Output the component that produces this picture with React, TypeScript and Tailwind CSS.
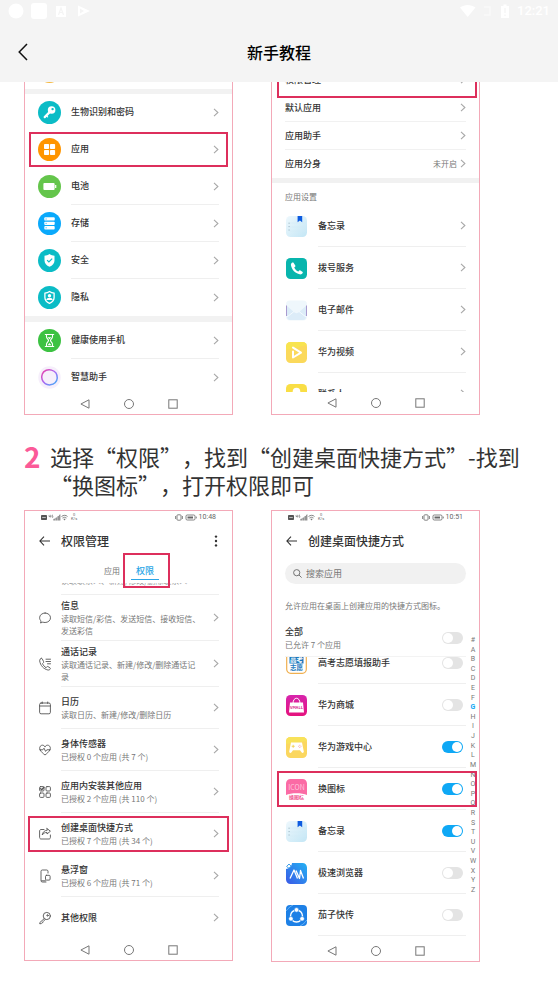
import React, { useState } from 'react';

interface SettingItem {
  title: string;
  icon: React.ReactNode;
  divider?: boolean;
  highlighted?: boolean;
}

interface PermissionItem {
  title: string;
  lines: string[];
  icon: React.ReactNode;
  highlighted?: boolean;
}

interface AppItem {
  title: string;
  icon: React.ReactNode;
  allowed?: boolean;
  highlighted?: boolean;
}

const Chevron: React.FC = () => (
  <svg className="w-[6px] h-[9px] shrink-0" viewBox="0 0 6 9" fill="none" stroke="#a8a8a8" strokeWidth="1.1">
    <path d="M1 .8 4.9 4.5 1 8.2" />
  </svg>
);

const Circle: React.FC<{ color: string; children: React.ReactNode }> = ({ color, children }) => (
  <svg className="w-[23px] h-[23px] shrink-0" viewBox="0 0 23 23" fill="none">
    <circle cx="11.5" cy="11.5" r="11.5" fill={color} />
    {children}
  </svg>
);

const AppIcon: React.FC<{ children: React.ReactNode }> = ({ children }) => (
  <svg className="w-[21px] h-[21px] shrink-0" viewBox="0 0 21 21" fill="none">
    {children}
  </svg>
);

const LineIcon: React.FC<{ children: React.ReactNode }> = ({ children }) => (
  <svg
    className="w-3 h-[14px] shrink-0"
    viewBox="0 0 12 14"
    fill="none"
    stroke="#555"
    strokeWidth="0.9"
    strokeLinecap="round"
    strokeLinejoin="round"
  >
    {children}
  </svg>
);

const NotesIcon: React.FC = () => (
  <AppIcon>
    <defs>
      <linearGradient id="notes" x1="0" y1="0" x2="1" y2="1">
        <stop offset="0" stopColor="#eef8fd" />
        <stop offset="1" stopColor="#c3e6f5" />
      </linearGradient>
    </defs>
    <rect width="21" height="21" rx="4.5" fill="url(#notes)" />
    <path d="M4 7h16M4 11h16M4 15h16" stroke="#d3ebf6" strokeWidth=".5" />
    <path d="M2.5 7.2h1.2M2.5 10.6h1.2M2.5 14h1.2" stroke="#8fa9b8" strokeWidth=".8" />
    <path d="M11.6 0h4.6v6.2l-2.3-1.8-2.3 1.8z" fill="#0d5be0" />
  </AppIcon>
);

const settings: SettingItem[] = [
  {
    title: '生物识别和密码',
    icon: (
      <Circle color="#0bbcc6">
        <circle cx="13.6" cy="9" r="3.8" fill="#fff" />
        <circle cx="14.6" cy="8.1" r="1.2" fill="#0bbcc6" />
        <path d="M11.4 11.4 6.7 16.1" stroke="#fff" strokeWidth="2.2" strokeLinecap="round" />
        <path d="m8.4 14.6 1.2 1.2" stroke="#fff" strokeWidth="1.2" strokeLinecap="round" />
      </Circle>
    )
  },
  {
    title: '应用',
    highlighted: true,
    icon: (
      <Circle color="#ff9500">
        <rect x="6" y="6" width="5.1" height="5.1" rx=".8" fill="#fff" />
        <rect x="12" y="6" width="5.1" height="5.1" rx=".8" fill="#fff" />
        <rect x="6" y="12" width="5.1" height="5.1" rx=".8" fill="#fff" />
        <rect x="12" y="12" width="5.1" height="5.1" rx=".8" fill="#fff" />
      </Circle>
    )
  },
  {
    title: '电池',
    divider: true,
    icon: (
      <Circle color="#64c54b">
        <rect x="5.4" y="8" width="11.2" height="7" rx="1" fill="#fff" />
        <path d="M17.7 10v3" stroke="#fff" strokeWidth="1.2" />
      </Circle>
    )
  },
  {
    title: '存储',
    divider: true,
    icon: (
      <Circle color="#0aa9fb">
        <rect x="6.3" y="5.3" width="10.4" height="3.3" rx=".9" fill="#fff" />
        <rect x="6.3" y="9.7" width="10.4" height="3.3" rx=".9" fill="#fff" />
        <rect x="6.3" y="14.1" width="10.4" height="3.3" rx=".9" fill="#fff" />
        <path d="M7.6 7h1M7.6 11.4h1M7.6 15.8h1" stroke="#0aa9fb" strokeWidth=".9" />
      </Circle>
    )
  },
  {
    title: '安全',
    divider: true,
    icon: (
      <Circle color="#0bbcc6">
        <path d="M11.5 5c1.6 1.1 3.2 1.6 5 1.8v4.7c0 3-2 5.1-5 6.3-3-1.2-5-3.3-5-6.3V6.8c1.8-.2 3.4-.7 5-1.8z" fill="#fff" />
        <path d="m9.1 11.2 1.8 1.8 3.3-3.3" stroke="#0bbcc6" strokeWidth="1.2" />
      </Circle>
    )
  },
  {
    title: '隐私',
    icon: (
      <Circle color="#0bbcc6">
        <path
          d="M11.5 5.5c1.6 1.1 3 1.5 4.6 1.7v4.3c0 2.8-1.8 4.6-4.6 5.8-2.8-1.2-4.6-3-4.6-5.8V7.2c1.6-.2 3-.6 4.6-1.7z"
          stroke="#fff"
          strokeWidth="1.3"
        />
        <circle cx="11.5" cy="9.8" r="1.7" fill="#fff" />
        <path d="M8.3 14c.2-1.6 1.4-2.3 3.2-2.3s3 .7 3.2 2.3z" fill="#fff" />
      </Circle>
    )
  }
];

const wellbeing: SettingItem[] = [
  {
    title: '健康使用手机',
    divider: true,
    icon: (
      <Circle color="#3cc242">
        <path
          d="M7.3 5.5h8.4M7.3 17.5h8.4M8.5 5.5v2.3c0 1.6 2 2.4 2 3.7s-2 2.1-2 3.7v2.3M14.5 5.5v2.3c0 1.6-2 2.4-2 3.7s2 2.1 2 3.7v2.3"
          stroke="#fff"
          strokeWidth="1.1"
          strokeLinecap="round"
        />
        <path d="M9.6 8.3h3.8l-1.9 2zM9.6 16.2l1.9-2.2 1.9 2.2z" fill="#fff" />
      </Circle>
    )
  },
  {
    title: '智慧助手',
    icon: (
      <svg className="w-[23px] h-[23px] shrink-0" viewBox="0 0 23 23" fill="none">
        <defs>
          <linearGradient id="assistant" x1="0" y1="0" x2="1" y2="1">
            <stop offset="0" stopColor="#f03fa5" />
            <stop offset=".5" stopColor="#a568f5" />
            <stop offset="1" stopColor="#38b6f7" />
          </linearGradient>
        </defs>
        <circle cx="11.5" cy="11.5" r="11.2" fill="#f6effb" />
        <path
          d="M8.2 4.3c3.3-1.1 7.7-.2 9.7 2.6 2 3 1.9 7.3-.8 9.9-2.5 2.4-7 2.8-9.9.8-3-2-4.2-6-3-9.3.6-1.9 2.1-3.3 4-4z"
          stroke="url(#assistant)"
          strokeWidth="1.5"
        />
      </svg>
    )
  }
];

const systemApps: SettingItem[] = [
  { title: '备忘录', icon: <NotesIcon /> },
  {
    title: '拨号服务',
    icon: (
      <AppIcon>
        <rect width="21" height="21" rx="4.5" fill="#08b5ad" />
        <path
          d="M6.3 4.6c-1 .6-1.6 1.5-1.3 2.9.9 4.3 4.2 7.8 8.7 8.8 1.3.3 2.4-.2 3-1.3.3-.5.1-.9-.3-1.2l-2-1.3c-.5-.3-1-.2-1.3.2l-.7.9c-1.9-.8-3.3-2.2-4.2-4.1l.9-.8c.4-.3.5-.8.2-1.3L7.7 4.9c-.4-.5-.9-.6-1.4-.3z"
          fill="#fff"
        />
      </AppIcon>
    )
  },
  {
    title: '电子邮件',
    icon: (
      <AppIcon>
        <rect y=".5" width="21" height="20" rx="4" fill="#eff7fc" />
        <path d="m1 6 7.5 6.5c1.2 1 2.800 1 4 0L20 6v11c0 1.5-1 3-3 3H4c-2 0-3-1.5-3-3z" fill="#dcecf8" />
        <path d="m1 17 7-5.5M20 17l-7-5.5" stroke="#f5fbff" />
        <path d="M.5 5.5V16M20.5 5.5V16" stroke="#a99bd0" />
      </AppIcon>
    )
  },
  {
    title: '华为视频',
    icon: (
      <AppIcon>
        <rect width="21" height="21" rx="4.5" fill="#fbd95b" />
        <path d="M0 8 21 3V4.5C21 2 19 0 16.5 0h-12C2 0 0 2 0 4.5z" fill="#f8e44f" />
        <path d="M7 9.5v6L15 10.7 7 5.6" stroke="#fff" strokeWidth="2" strokeLinejoin="round" strokeLinecap="round" />
      </AppIcon>
    )
  },
  {
    title: '联系人',
    icon: (
      <AppIcon>
        <rect width="21" height="21" rx="4.5" fill="#f9de45" />
        <circle cx="10.5" cy="7.5" r="3.8" fill="#fff" />
        <path d="M3 18c0-4 3-6 7.5-6s7.5 2 7.5 6z" fill="#fff" />
      </AppIcon>
    )
  }
];

const permissions: PermissionItem[] = [
  {
    title: '信息',
    lines: ['读取短信/彩信、发送短信、接收短信、', '发送彩信'],
    icon: (
      <LineIcon>
        <path d="M6.1 2C9 2 11.5 4 11.5 6.8s-2.5 4.7-5.4 4.7c-.8 0-1.6-.1-2.3-.4L1.5 12l.6-2C1.2 9.2.6 8.1.6 6.8.6 4 3.2 2 6.1 2z" />
      </LineIcon>
    )
  },
  {
    title: '通话记录',
    lines: ['读取通话记录、新建/修改/删除通话记', '录'],
    icon: (
      <LineIcon>
        <path d="M2 1.5c-.8.5-1.5 1.4-1.3 2.5.7 4.5 3.8 8 8.2 9 1 .2 2-.3 2.4-1.1.2-.5 0-.9-.4-1.2L8.9 9.6c-.4-.2-.8-.1-1.1.2l-.7.9C5.4 9.7 4.2 8.3 3.5 6.6l.9-.8c.3-.3.4-.7.2-1.1L3.3 1.9c-.3-.5-.8-.7-1.3-.4zM7 2.2h4.5M7 4.5h4.5M8.5 6.8h3" />
      </LineIcon>
    )
  },
  {
    title: '日历',
    lines: ['读取日历、新建/修改/删除日历'],
    icon: (
      <LineIcon>
        <rect x=".6" y="2" width="10.8" height="10.8" rx="1.5" />
        <path d="M.6 5h10.8M3.3 1v1.5M8.7 1v1.5" />
      </LineIcon>
    )
  },
  {
    title: '身体传感器',
    lines: ['已授权 0 个应用 (共 7 个)'],
    icon: (
      <LineIcon>
        <path d="M6 3.6C5 2.2 3.6 1.9 2.4 2.4.6 3.2.2 5.3 1.2 7 2.2 8.9 4.2 10.7 6 12c1.8-1.3 3.8-3.1 4.8-5 1-1.7.6-3.8-1.2-4.6-1.2-.5-2.6-.2-3.6 1.2z" />
        <path d="M.8 6.8h3l1.2-1.6 1.6 3.2 1.2-1.6h3.4" />
      </LineIcon>
    )
  },
  {
    title: '应用内安装其他应用',
    lines: ['已授权 2 个应用 (共 110 个)'],
    icon: (
      <LineIcon>
        <rect x=".6" y="1.6" width="4.4" height="4.4" rx="1" />
        <rect x="7" y="1.6" width="4.4" height="4.4" rx="1" />
        <rect x=".6" y="8" width="4.4" height="4.4" rx="1" />
        <rect x="7" y="8" width="4.4" height="4.4" rx="1" />
        <path d="m1.5 3.6 1.2 1.2 2.3-2.6" strokeWidth="1.3" />
      </LineIcon>
    )
  },
  {
    title: '创建桌面快捷方式',
    lines: ['已授权 7 个应用 (共 34 个)'],
    highlighted: true,
    icon: (
      <LineIcon>
        <path d="M5 2.5H2C1.2 2.5.6 3.1.6 4v6.5c0 .9.6 1.5 1.4 1.5h8c.8 0 1.4-.6 1.4-1.5V8" />
        <path d="m8 1.5 3.4 2.7L8 7V5.4c-2 0-3.7.9-4.8 2.6C3.5 5.5 5.2 3.5 8 3.2z" />
      </LineIcon>
    )
  },
  {
    title: '悬浮窗',
    lines: ['已授权 6 个应用 (共 71 个)'],
    icon: (
      <LineIcon>
        <path d="M9 4V2.3C9 1.5 8.5 1 7.7 1H3.3C2.5 1 2 1.5 2 2.3v9.4c0 .8.5 1.3 1.3 1.3H7M2.5 11.8h4" />
        <rect x="6.5" y="6.3" width="4.6" height="4.8" rx="1" />
      </LineIcon>
    )
  },
  {
    title: '其他权限',
    lines: [],
    icon: (
      <LineIcon>
        <circle cx="7.8" cy="5" r="3.6" />
        <circle cx="8.5" cy="4.4" r=".7" />
        <path d="M5.2 7.6.7 11.7v1h1.5l.7-.9.9-.2.3-1 2-2" />
      </LineIcon>
    )
  }
];

const shortcutApps: AppItem[] = [
  {
    title: '高考志愿填报助手',
    icon: (
      <AppIcon>
        <rect x=".7" y=".7" width="19.6" height="19.6" rx="4" fill="#fff" stroke="#f0b050" strokeWidth="1.2" />
        <rect x="3.5" y="2" width="14" height="8.5" fill="#1c78bd" />
        <text x="10.5" y="9" fontSize="6.5" fontWeight="700" fill="#fff" textAnchor="middle">高考</text>
        <text x="10.5" y="17.2" fontSize="6.5" fontWeight="700" fill="#1c78bd" textAnchor="middle">志愿</text>
      </AppIcon>
    )
  },
  {
    title: '华为商城',
    icon: (
      <AppIcon>
        <defs>
          <linearGradient id="mall" x1="0" y1="0" x2="0" y2="1">
            <stop offset="0" stopColor="#d725ad" />
            <stop offset="1" stopColor="#e5127d" />
          </linearGradient>
        </defs>
        <rect width="21" height="21" rx="4.5" fill="url(#mall)" />
        <path d="M4 7.5h13L18 17.5H3z" fill="#fff" />
        <path d="M7 8.5c0-7 7-7 7 0" stroke="#fff" />
        <text x="10.5" y="13.5" fontSize="4" fontWeight="700" fill="#d81b8c" textAnchor="middle">VMALL</text>
      </AppIcon>
    )
  },
  {
    title: '华为游戏中心',
    allowed: true,
    icon: (
      <AppIcon>
        <rect width="21" height="21" rx="4.5" fill="#fbd75f" />
        <path d="M0 7 21 4C21 2 19 0 16.5 0h-12C2 0 0 2 0 4.5z" fill="#f8e25a" />
        <path d="M5 5.5h11l1.8 9c.1 1.5-1.5 1.9-2.3.8l-1.5-2H7l-1.500 2c-.8 1.1-2.4.7-2.300-.8z" fill="#fff" />
        <path d="M5.700 9.300h3M7.200 7.800v3" stroke="#f2cf55" strokeWidth=".9" />
        <path d="M13.800 7.800v.9M13.800 10v.9M12.300 9.300h.8M14.600 9.300h.8" stroke="#ef8b91" strokeWidth=".8" />
      </AppIcon>
    )
  },
  {
    title: '换图标',
    allowed: true,
    highlighted: true,
    icon: (
      <AppIcon>
        <rect width="21" height="21" rx="4.5" fill="#fff" />
        <path d="M0 16V4.5C0 2 2 0 4.5 0h12C19 0 21 2 21 4.5V16c-5-2.5-16-2.5-21 0z" fill="#fb6ba5" />
        <text x="10.5" y="11" fontSize="7" fill="#ffc5dc" textAnchor="middle">ICON</text>
        <text x="10.5" y="20" fontSize="5" fontWeight="700" fill="#f0558f" textAnchor="middle">换图标</text>
      </AppIcon>
    )
  },
  { title: '备忘录', allowed: true, icon: <NotesIcon /> },
  {
    title: '极速浏览器',
    icon: (
      <AppIcon>
        <defs>
          <linearGradient id="browser" x1="0" y1="1" x2="1" y2="0">
            <stop offset="0" stopColor="#3a58e6" />
            <stop offset="1" stopColor="#24b2f3" />
          </linearGradient>
        </defs>
        <path d="M6 0h10.5C19 0 21 2 21 4.5v12c0 2.5-2 4.5-4.5 4.5h-12C2 21 0 19 0 16.5V6c2.5 0 6-3 6-6z" fill="url(#browser)" />
        <path d="M.6 3.5 3 1l2.2 2.3L3 5.3z" stroke="#3e9fe8" />
        <path d="M4 15.5 8 7l3.5 8.5M10 7.5l3.5 8 1-8 3 8" stroke="#fff" strokeWidth="1.3" strokeLinejoin="round" />
      </AppIcon>
    )
  },
  {
    title: '茄子快传',
    icon: (
      <AppIcon>
        <rect width="21" height="21" rx="4" fill="#1d80e6" />
        <path d="M0 6c2-2.5 4-4.5 7-6M21 15c-2 2.5-4 4.5-7 6" stroke="#7cc0f8" strokeWidth=".8" />
        <circle cx="10.5" cy="11" r="6" stroke="#fff" strokeWidth="1.4" />
        <circle cx="10.5" cy="4.9" r="2.3" fill="#fff" stroke="#1d80e6" strokeWidth=".6" />
        <circle cx="4.9" cy="13.8" r="2.3" fill="#fff" stroke="#1d80e6" strokeWidth=".6" />
        <circle cx="16.1" cy="13.8" r="2.3" fill="#fff" stroke="#1d80e6" strokeWidth=".6" />
      </AppIcon>
    )
  }
];

const indexLetters = '#ABCDEFGHIJKLMNOPQRSTUVWXYZ'.split('');

const Phone: React.FC<{ label: string; scrolled?: boolean; children: React.ReactNode }> = ({
  label,
  scrolled,
  children
}) => (
  <section
    aria-label={label}
    className={`relative overflow-hidden border-x border-b border-[#f3a9b8] bg-white text-[#333] ${
      scrolled ? '' : 'border-t'
    }`}
  >
    {children}
  </section>
);

const NavBar: React.FC<{ className: string }> = ({ className }) => (
  <div className={`flex items-center justify-center gap-[34px] bg-white ${className}`}>
    <button type="button" aria-label="返回">
      <svg className="w-[10px] h-[10px]" viewBox="0 0 10 10" fill="none" stroke="#777" strokeLinejoin="round">
        <path d="M9 .8v8.4L.9 5z" />
      </svg>
    </button>
    <button type="button" aria-label="主页">
      <svg className="w-[10px] h-[10px]" viewBox="0 0 10 10" fill="none" stroke="#777">
        <circle cx="5" cy="5" r="4.5" />
      </svg>
    </button>
    <button type="button" aria-label="最近任务">
      <svg className="w-[10px] h-[10px]" viewBox="0 0 10 10" fill="none" stroke="#777">
        <rect x=".8" y=".8" width="8.4" height="8.4" />
      </svg>
    </button>
  </div>
);

const PhoneStatus: React.FC<{ time: string }> = ({ time }) => (
  <div className="flex h-3 items-center justify-between pl-4 pr-4 font-[Roboto,sans-serif] text-[#666]">
    <div className="flex items-center gap-[3px]">
      <svg className="w-[27px] h-[7px]" viewBox="0 0 27 7" fill="none">
        <rect y="1" width="6" height="5" rx=".8" fill="#555" />
        <path d="M1.2 3.5h3.6" stroke="#bbb" />
        <path d="M8 1.2v1.3h1.5M9.3.8v2.7M11 1.2h1M11 1.2v2h1V2.4" stroke="#666" strokeWidth=".6" />
        <path d="M12.5 6.5V5l1.2-.5v2zM14.5 6.5V4l1.2-.8v3.3zM16.500 6.500v-4l1.200-.8v4.800zM18.300 6.500V1l1-.7v6.200z" fill="#666" />
        <path d="M20.500 2.500c2-1.600 4.500-1.600 6 0M21.500 4c1.300-1 2.700-1 4 0" stroke="#777" strokeWidth=".9" />
        <path d="m22.200 4.800 1.300 1.700 1.300-1.700z" fill="#777" />
      </svg>
      <div className="flex flex-col items-center text-[4px] leading-[4px]">
        <span>0</span>
        <span>K/s</span>
      </div>
    </div>
    <div className="flex items-center gap-[2px]">
      <svg className="w-[22px] h-[7px]" viewBox="0 0 22 7" fill="none" stroke="#666" strokeWidth=".8">
        <rect x="2" y=".8" width="4" height="5.4" rx=".8" />
        <path d="M.6 2v3M7.4 2v3" />
        <rect x="11" y="1" width="9" height="5" rx="1.2" />
        <path d="M12.5 3.5h5.500" strokeWidth="2" />
        <path d="M21.3 2.6v1.8" />
      </svg>
      <span className="text-[7px] leading-3">{time}</span>
    </div>
  </div>
);

const BackArrow: React.FC = () => (
  <button type="button" aria-label="返回">
    <svg className="w-[11px] h-[10px]" viewBox="0 0 11 10" fill="none" stroke="#333" strokeWidth="1.1">
      <path d="M5 .6.9 5 5 9.4M.9 5H11" />
    </svg>
  </button>
);

const SettingRow: React.FC<{ item: SettingItem }> = ({ item }) => (
  <a href="#" className="relative flex h-[37px] items-center gap-[10px] pl-[13px] pr-[13px]">
    {item.icon}
    <div
      className={`flex flex-1 items-center justify-between self-stretch border-b ${
        item.divider ? 'border-[#efefef]' : 'border-transparent'
      }`}
    >
      <span className="text-[9px] font-medium">{item.title}</span>
      <Chevron />
    </div>
    {item.highlighted && <span className="absolute inset-x-1 inset-y-px border-2 border-[#dd2f5c]" />}
  </a>
);

const SimpleRow: React.FC<{ title: string; value?: string; last?: boolean }> = ({ title, value, last }) => (
  <a
    href="#"
    className={`mx-[13px] flex h-7 items-center justify-between border-b ${
      last ? 'border-transparent' : 'border-[#f1f1f1]'
    }`}
  >
    <span className="text-[9px] font-medium">{title}</span>
    <span className="flex items-center gap-[3px] text-[8px] text-[#777]">
      {value}
      <Chevron />
    </span>
  </a>
);

const SettingsPhone: React.FC = () => (
  <Phone label="设置" scrolled>
    <div className="-mt-[29px] flex h-9 items-center pl-[13px]">
      <Circle color="#f5b73c">
        <circle cx="11.5" cy="11.5" r="4" fill="#fff" />
      </Circle>
    </div>
    <div className="h-[5px] bg-[#f2f2f2]" />
    {settings.map((item) => (
      <SettingRow key={item.title} item={item} />
    ))}
    <div className="h-[6px] bg-[#f2f2f2]" />
    {wellbeing.map((item) => (
      <SettingRow key={item.title} item={item} />
    ))}
    <NavBar className="h-[18px] pb-[2px]" />
  </Phone>
);

const AppsPhone: React.FC = () => (
  <Phone label="应用" scrolled>
    <div className="relative -mt-4">
      <SimpleRow title="权限管理" last />
      <span className="absolute -bottom-1 left-[5px] right-[2px] top-0 border-2 border-[#dd2f5c]" />
    </div>
    <SimpleRow title="默认应用" />
    <SimpleRow title="应用助手" />
    <SimpleRow title="应用分身" value="未开启" last />
    <div className="h-[5px] bg-[#f1f1f1]" />
    <h3 className="h-[22px] pl-[13px] pt-2 text-[8px] leading-3 text-[#777]">应用设置</h3>
    <div className="h-[187px] overflow-hidden">
      {systemApps.map((item) => (
        <a key={item.title} href="#" className="flex h-[42px] items-center gap-[11px] pl-[14px] pr-[13px]">
          {item.icon}
          <div className="flex flex-1 items-center justify-between self-stretch border-b border-[#efefef]">
            <span className="text-[9px] font-medium">{item.title}</span>
            <Chevron />
          </div>
        </a>
      ))}
    </div>
    <NavBar className="h-[22px]" />
  </Phone>
);

const PermissionRow: React.FC<{ item: PermissionItem; last: boolean }> = ({ item, last }) => (
  <a
    href="#"
    className={`relative flex items-center gap-[10px] pl-[14px] pr-[13px] ${
      item.lines.length > 1 ? 'h-[46px]' : 'h-[42px]'
    }`}
  >
    {item.icon}
    <div
      className={`flex flex-1 items-center justify-between self-stretch border-b ${
        last || item.highlighted ? 'border-transparent' : 'border-[#efefef]'
      }`}
    >
      <div>
        <div className="text-[9px] font-medium leading-[14px]">{item.title}</div>
        {item.lines.map((line) => (
          <div key={line} className="whitespace-nowrap text-[8px] leading-3 text-[#777]">
            {line}
          </div>
        ))}
      </div>
      <Chevron />
    </div>
    {item.highlighted && <span className="absolute inset-x-[3px] inset-y-[3px] border-2 border-[#dd2f5c]" />}
  </a>
);

const PermissionsPhone: React.FC = () => (
  <Phone label="权限管理">
    <PhoneStatus time="10:48" />
    <div className="flex h-9 items-center gap-[11px] pl-[14px] pr-[14px]">
      <BackArrow />
      <h3 className="flex-1 text-[12px] font-medium">权限管理</h3>
      <button type="button" aria-label="更多">
        <svg className="w-[4px] h-[12px]" viewBox="0 0 4 12" fill="#333">
          <circle cx="2" cy="1.6" r="1.2" />
          <circle cx="2" cy="6" r="1.2" />
          <circle cx="2" cy="10.4" r="1.2" />
        </svg>
      </button>
    </div>
    <div className="flex h-6 justify-center gap-[11px] pl-[6px]">
      <button type="button" className="text-[8px] text-[#777]">
        应用
      </button>
      <button type="button" className="relative flex w-7 items-center justify-center text-[9px] font-medium text-[#2ba6e6]">
        权限
        <span className="absolute inset-x-0 bottom-[3px] h-px bg-[#2ba6e6]" />
        <span className="absolute -bottom-[5px] -left-2 -right-[11px] -top-[6px] border-2 border-[#dd2f5c]" />
      </button>
    </div>
    <div className="ml-9 mr-[13px] h-3 border-b border-[#efefef]">
      <div className="flex h-[3px] items-end overflow-hidden whitespace-nowrap text-[8px] leading-[10px] text-[#999]">
        读取联系人、新建/修改/删除联系人
      </div>
    </div>
    {permissions.map((item, index) => (
      <PermissionRow key={item.title} item={item} last={index === permissions.length - 1} />
    ))}
    <NavBar className="h-[21px]" />
  </Phone>
);

const Toggle: React.FC<{ id: string; initial?: boolean }> = ({ id, initial = false }) => {
  const [checked, setChecked] = useState(initial);
  return (
    <input
      id={id}
      type="checkbox"
      role="switch"
      checked={checked}
      onChange={(e) => setChecked(e.target.checked)}
      className="mr-[3px] flex h-3 w-[21px] shrink-0 appearance-none items-center rounded-full bg-[#e4e4e4] px-px before:size-[10px] before:rounded-full before:bg-white before:content-[''] checked:justify-end checked:bg-[#0fa8f5]"
    />
  );
};

const ShortcutPhone: React.FC = () => {
  const [query, setQuery] = useState('');

  return (
    <Phone label="创建桌面快捷方式">
      <PhoneStatus time="10:51" />
      <div className="flex h-9 items-center gap-[11px] pl-[14px]">
        <BackArrow />
        <h3 className="text-[12px] font-medium">创建桌面快捷方式</h3>
      </div>
      <label className="mx-[13px] mt-1 flex h-[21px] items-center gap-1 rounded-full bg-[#f1f1f1] pl-2">
        <svg className="w-[9px] h-[9px] shrink-0" viewBox="0 0 9 9" fill="none" stroke="#666" strokeWidth=".9">
          <circle cx="3.7" cy="3.7" r="3.1" />
          <path d="m6 6 2.6 2.6" />
        </svg>
        <input
          type="text"
          aria-label="搜索应用"
          placeholder="搜索应用"
          value={query}
          onChange={(e) => setQuery(e.target.value)}
          className="w-full min-w-0 bg-transparent text-[9px] outline-none placeholder:text-[#777]"
        />
      </label>
      <p className="mb-2 ml-[13px] mt-4 whitespace-nowrap text-[8px] leading-3 text-[#777]">
        允许应用在桌面上创建应用的快捷方式图标。
      </p>
      <div className="mx-[13px] flex h-[37px] items-center justify-between border-b border-[#f3f3f3]">
        <label htmlFor="allow-all">
          <span className="block text-[9px] font-medium leading-[14px]">全部</span>
          <span className="block text-[8px] leading-3 text-[#777]">已允许 7 个应用</span>
        </label>
        <Toggle id="allow-all" />
      </div>
      <div className="overflow-hidden">
        <div className="-mt-[15px]">
          {shortcutApps.map((item, index) => (
            <div key={item.title} className="relative flex h-[42px] items-center gap-[11px] pl-[14px] pr-[13px]">
              {item.icon}
              <div className="flex flex-1 items-center justify-between self-stretch border-b border-[#efefef]">
                <label htmlFor={`app-${index}`} className="text-[9px] font-medium">
                  {item.title}
                </label>
                <Toggle id={`app-${index}`} initial={item.allowed} />
              </div>
              {item.highlighted && (
                <span className="pointer-events-none absolute inset-y-[3px] left-[5px] right-[2px] z-10 border-2 border-[#dd2f5c]" />
              )}
            </div>
          ))}
        </div>
      </div>
      <NavBar className="h-[25px] pt-1" />
      <div className="absolute right-[2px] top-[125px] flex h-[259px] w-2 flex-col items-center justify-between font-[Roboto,sans-serif] text-[7px] leading-[9px] text-[#777]">
        {indexLetters.map((letter) => (
          <span key={letter} className={letter === 'G' ? 'font-bold text-[#0fa8f5]' : ''}>
            {letter}
          </span>
        ))}
      </div>
    </Phone>
  );
};

const SystemStatus: React.FC = () => (
  <div className="flex h-[22px] items-center justify-between pl-2 pr-2 text-white">
    <svg className="w-[84px] h-4" viewBox="0 0 84 16" fill="#fff">
      <circle cx="8" cy="8" r="7.5" />
      <rect x="23" width="16" height="16" rx="3" />
      <path d="M48 3h10v11H48z" />
      <path d="m50.5 12 2.5-7 2.5 7M51.5 9.5h3" fill="none" stroke="#f4f4f4" strokeWidth="1.2" />
      <path d="M70 2.500 82 8l-12 5.500z" />
      <path d="m72 5.500 4 2.500-4 2.500z" fill="#f4f4f4" />
    </svg>
    <div className="flex items-center gap-[7px]">
      <svg className="w-[50px] h-[14px]" viewBox="0 0 50 14" fill="#fff">
        <path d="M0 3.500c4.500-3.500 11-3.500 15.500 0L7.700 13z" />
        <path d="M24 3h6v8h-6" fill="none" stroke="#f9f9f9" strokeWidth="1.500" />
        <path d="M41 2h2.500V.5h3V2H49v12h-8z" />
        <path d="M45 4v5M45 10.500V12" stroke="#f4f4f4" strokeWidth="1.300" />
      </svg>
      <span className="font-[Roboto,sans-serif] text-[13px] font-medium leading-4">12:21</span>
    </div>
  </div>
);

const App: React.FC = () => {
  return (
    <div lang="zh-CN" className="min-h-screen bg-white font-['Noto_Sans_CJK_SC',sans-serif]">
      <header className="bg-[#f4f4f4]">
        <SystemStatus />
        <div className="grid h-[60px] grid-cols-[1fr_auto_1fr] items-center pl-[18px] pr-[18px]">
          <button type="button" aria-label="返回" className="justify-self-start">
            <svg className="w-[10px] h-[18px]" viewBox="0 0 10 18" fill="none" stroke="#111" strokeWidth="1.5">
              <path d="M9 1 1.2 9 9 17" />
            </svg>
          </button>
          <h1 className="text-base font-medium text-black">新手教程</h1>
        </div>
      </header>

      <main className="pb-[30px] pl-6 pr-[78px]">
        <div className="grid grid-cols-2 items-start gap-[38px]">
          <SettingsPhone />
          <AppsPhone />
        </div>

        <div className="-mr-[70px] mb-3 mt-[27px] flex gap-[10px]">
          <span className="w-4 text-[28px] font-bold leading-7 text-[#fb5a98]">2</span>
          <h2 className="text-[22px] leading-7 text-[#333] [text-spacing-trim:space-all]">
            选择“权限”，找到“创建桌面快捷方式”-找到
            <br />
            “换图标”，打开权限即可
          </h2>
        </div>

        <div className="grid grid-cols-2 items-start gap-[38px]">
          <PermissionsPhone />
          <ShortcutPhone />
        </div>
      </main>
    </div>
  );
};

export default App;
